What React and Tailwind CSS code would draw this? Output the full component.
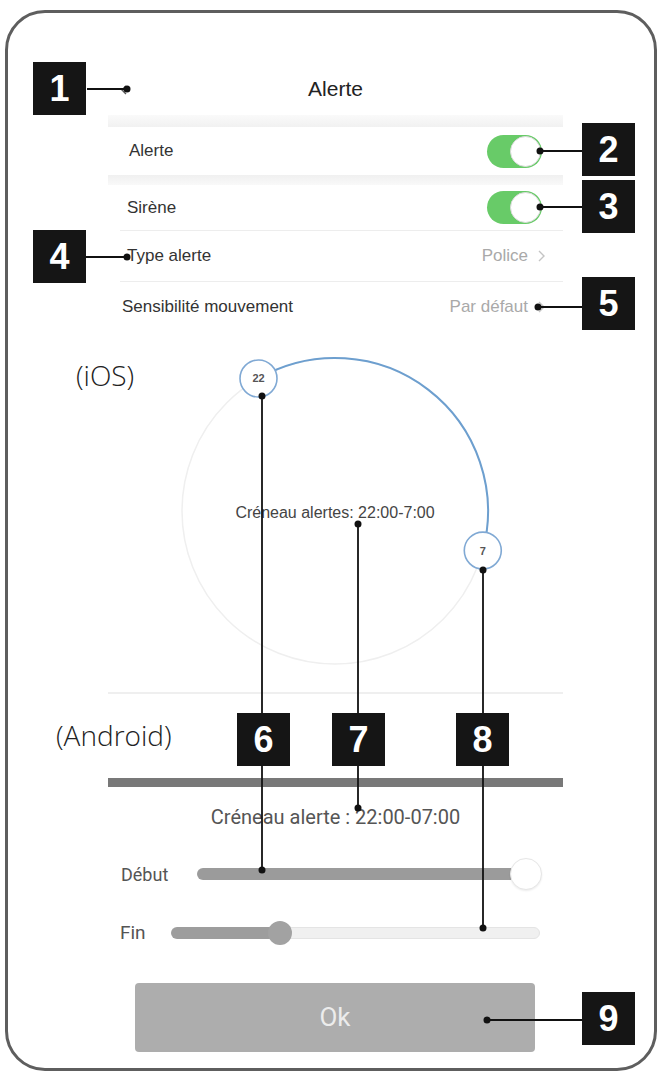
import React from 'react';

const callouts = [
  { n: '1', cls: 'left-[33px] top-[62px]' },
  { n: '2', cls: 'left-[582px] top-[123px]' },
  { n: '3', cls: 'left-[582px] top-[180px]' },
  { n: '4', cls: 'left-[33px] top-[230px]' },
  { n: '5', cls: 'left-[582px] top-[277px]' },
  { n: '6', cls: 'left-[237px] top-[713px]' },
  { n: '7', cls: 'left-[332px] top-[713px]' },
  { n: '8', cls: 'left-[456px] top-[713px]' },
  { n: '9', cls: 'left-[582px] top-[992px]' },
];

const leaders = [
  { d: 'M87 89 H127', dots: [[127, 89]] },
  { d: 'M540 151 H582', dots: [[540, 151]] },
  { d: 'M540 207 H582', dots: [[540, 207]] },
  { d: 'M86 257 H127', dots: [[127, 257]] },
  { d: 'M538 307 H582', dots: [[538, 307]] },
  { d: 'M262 396 V870', dots: [[262, 396], [262, 870]] },
  { d: 'M358 524 V808', dots: [[358, 524], [358, 808]] },
  { d: 'M483 570 V928', dots: [[483, 570], [483, 928]] },
  { d: 'M487 1020 H582', dots: [[487, 1020]] },
];

const Toggle = () => (
  <div className="ml-auto mr-[21px] w-[55px] h-[33px] rounded-full bg-[#68cb68] flex items-center justify-end p-[1px]">
    <div className="w-[31px] h-[31px] rounded-full bg-white border border-[#dadada]" />
  </div>
);

const Chevron = () => (
  <svg width="7" height="12" viewBox="0 0 7 12" className="ml-[10px]">
    <path d="M1 1 L6 6 L1 11" fill="none" stroke="#c4c4c4" strokeWidth="1.4" />
  </svg>
);

// 24h ring: 0h at top, 15deg per hour
const cx = 227;
const cy = 179;
const r = 153;
const pt = (h) => {
  const a = ((h * 15 - 90) * Math.PI) / 180;
  return [cx + r * Math.cos(a), cy + r * Math.sin(a)];
};

const IosRing = () => {
  const [sx, sy] = pt(22);
  const [ex, ey] = pt(7);
  return (
    <svg width="455" height="360" viewBox="0 0 455 360" className="block">
      <circle cx={cx} cy={cy} r={r} fill="none" stroke="#efefef" strokeWidth="1.5" />
      <path d={`M${sx} ${sy} A${r} ${r} 0 0 1 ${ex} ${ey}`} fill="none" stroke="#6d9fcf" strokeWidth="2" />
      <circle cx={sx} cy={sy} r="18.5" fill="white" stroke="#80a9d4" strokeWidth="1.6" />
      <circle cx={ex} cy={ey} r="18.5" fill="white" stroke="#80a9d4" strokeWidth="1.6" />
      <text x={sx} y={sy + 4} textAnchor="middle" fontSize="11" fontWeight="bold" fill="#555" fontFamily="Liberation Sans, Arial, sans-serif">22</text>
      <text x={ex} y={ey + 4} textAnchor="middle" fontSize="11" fontWeight="bold" fill="#555" fontFamily="Liberation Sans, Arial, sans-serif">7</text>
      <text x={cx} y={cy + 7} textAnchor="middle" fontSize="16" fill="#444" fontFamily="Liberation Sans, Arial, sans-serif">Créneau alertes: 22:00-7:00</text>
    </svg>
  );
};

export default function App() {
  return (
    <div className="relative w-[662px] h-[1073px] bg-white overflow-hidden font-['Liberation_Sans',Arial,sans-serif]">
      {/* phone frame */}
      <div className="mt-[10px] ml-[5px] w-[652px] h-[1061px] border-[3px] border-[#5e5e5e] rounded-[40px] pl-[100px]">
        <div className="w-[455px] flex flex-col">
          {/* nav bar */}
          <div className="h-[102px] grid grid-cols-[40px_1fr_40px] items-end pb-[14px]">
            <div className="pl-[12px] pb-[6px]">
              <svg width="10" height="10" viewBox="0 0 10 10">
                <path d="M6 1 L2 5 L6 9" fill="none" stroke="#555" strokeWidth="1.4" />
              </svg>
            </div>
            <div className="text-center text-[21px] leading-[24px] font-medium text-[#222]">Alerte</div>
            <div />
          </div>

          {/* iOS settings list */}
          <div className="h-[12px] bg-gradient-to-b from-[#fafafa] to-[#f1f1f1]" />
          <div className="h-[48px] flex items-center pl-[21px] text-[17px] text-[#333]">
            Alerte
            <Toggle />
          </div>
          <div className="h-[10px] bg-gradient-to-b from-[#f0f0f0] to-[#f9f9f9]" />
          <div className="h-[45px] flex items-center pl-[19px] text-[17px] text-[#333]">
            Sirène
            <Toggle />
          </div>
          <div className="h-[1px] ml-[12px] bg-[#ededed]" />
          <div className="h-[50px] flex items-center pl-[19px] pr-[18px] text-[17px] text-[#333]">
            Type alerte
            <span className="ml-auto text-[#a9a9a9]">Police</span>
            <Chevron />
          </div>
          <div className="h-[1px] ml-[12px] bg-[#ededed]" />
          <div className="h-[50px] flex items-center pl-[14px] pr-[18px] text-[17px] text-[#333]">
            Sensibilité mouvement
            <span className="ml-auto text-[#a9a9a9]">Par défaut</span>
            <Chevron />
          </div>

          {/* iOS time ring */}
          <IosRing />
          <div className="h-[2px] bg-[#efefef]" />

          {/* Android */}
          <div className="h-[84px]" />
          <div className="h-[9px] bg-[#787878]" />
          <div className="font-['Roboto',sans-serif]">
            <div className="mt-[16px] h-[28px] flex items-center justify-center text-[20px] text-[#555]">
              Créneau alerte : 22:00-07:00
            </div>

            <div className="mt-[27px] h-[32px] flex items-center">
              <div className="w-[89px] pl-[13px] text-[18px] text-[#555]">Début</div>
              <div className="w-[345px] flex items-center">
                <div className="w-[330px] h-[12px] rounded-full bg-[#9b9b9b]" />
                <div className="w-[32px] h-[32px] -ml-[17px] rounded-full bg-white border border-[#e6e6e6] shadow-[0_1px_2px_rgba(0,0,0,0.08)]" />
              </div>
            </div>

            <div className="mt-[27px] h-[32px] flex items-center">
              <div className="w-[63px] pl-[12px] text-[19px] text-[#555]">Fin</div>
              <div className="w-[369px] flex items-center">
                <div className="w-[103px] h-[12px] rounded-l-full bg-[#9d9d9d]" />
                <div className="relative z-10 w-[24px] h-[24px] -ml-[6px] rounded-full bg-[#a2a2a2]" />
                <div className="w-[260px] h-[12px] -ml-[12px] rounded-r-full bg-[#f0f0f0] border border-[#e4e4e4]" />
              </div>
            </div>

            <button className="mt-[34px] ml-[27px] w-[400px] h-[69px] rounded-[4px] bg-[#adadad] text-[26px] text-[#ececec] flex items-center justify-center">
              Ok
            </button>
          </div>
        </div>
      </div>

      {/* annotation layer */}
      <svg width="662" height="1073" viewBox="0 0 662 1073" className="absolute inset-0 pointer-events-none">
        {leaders.map((l, i) => (
          <g key={i}>
            <path d={l.d} stroke="#111" strokeWidth="1.8" fill="none" />
            {l.dots.map(([x, y], j) => (
              <circle key={j} cx={x} cy={y} r="3.5" fill="#111" />
            ))}
          </g>
        ))}
      </svg>

      <div className="absolute left-[76px] top-[359px] font-['Open_Sans',sans-serif] font-light text-[28px] leading-[32px] text-[#222]">(iOS)</div>
      <div className="absolute left-[56px] top-[719px] font-['Open_Sans',sans-serif] font-light text-[28px] leading-[32px] text-[#222]">(Android)</div>

      {callouts.map((c) => (
        <div
          key={c.n}
          className={`absolute ${c.cls} w-[53px] h-[53px] bg-[#151515] text-white text-[36px] font-bold leading-none flex items-center justify-center`}
        >
          {c.n}
        </div>
      ))}
    </div>
  );
}
